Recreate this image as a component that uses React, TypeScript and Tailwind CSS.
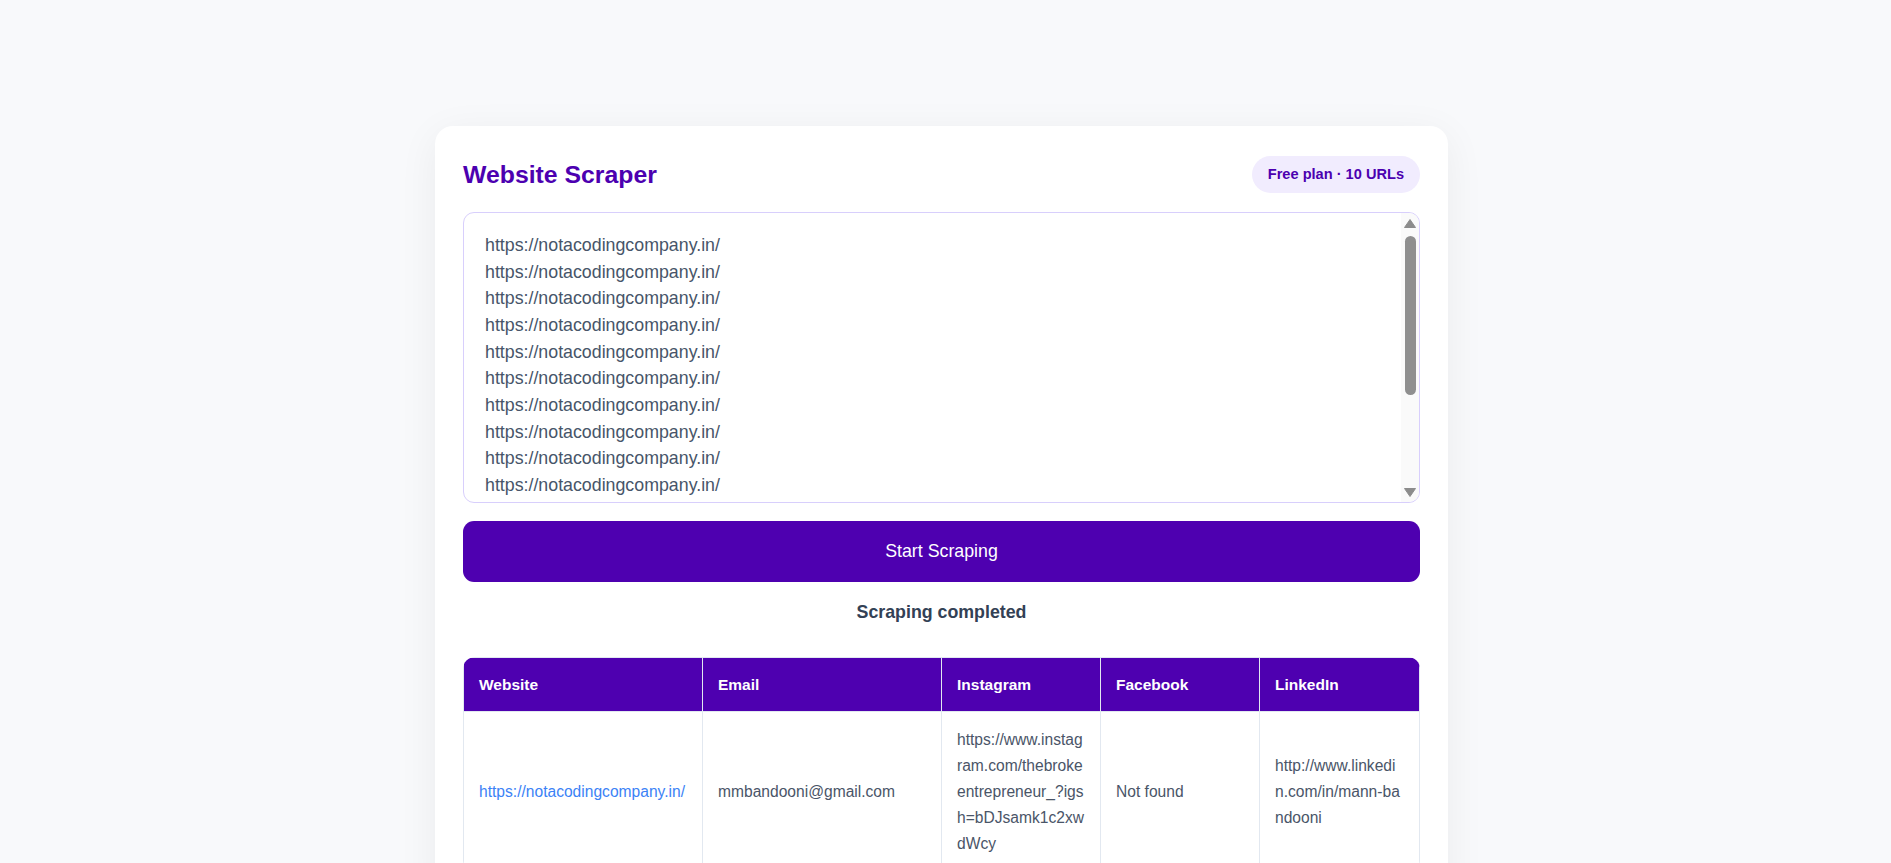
import { useState } from "react";

const URLS = Array.from({ length: 10 }, () => "https://notacodingcompany.in/").join("\n");

function FakeScrollbar() {
  return (
    <div className="pointer-events-none absolute right-[1px] top-[1px] bottom-[1px] flex w-[18px] flex-col items-center rounded-r-[10px] bg-[#fafafa] pt-[6px] pb-[5px]">
      <svg width="12" height="9" viewBox="0 0 12 9">
        <path d="M6 0.5 L11.5 8.5 L0.5 8.5 Z" fill="#8c8c8c" stroke="#8c8c8c" strokeLinejoin="round" />
      </svg>
      <div className="mt-[8px] h-[159px] w-[11px] rounded-full bg-[#8f8f8f]" />
      <div className="flex-1" />
      <svg width="12" height="9" viewBox="0 0 12 9">
        <path d="M0.5 0.5 L11.5 0.5 L6 8.5 Z" fill="#8c8c8c" stroke="#8c8c8c" strokeLinejoin="round" />
      </svg>
    </div>
  );
}

export default function App() {
  const [urls, setUrls] = useState(URLS);

  return (
    <div className="min-h-screen bg-[#f8f9fb] pt-[126px] pr-[8px] font-['Liberation_Sans',Arial,sans-serif]">
      <div className="mx-auto w-[1013px] rounded-[18px] bg-white px-[28px] pt-[30px] pb-[28px] shadow-[0_8px_40px_rgba(15,23,42,0.06)]">
        <div className="flex items-center justify-between">
          <h1 className="text-[24.8px] font-bold leading-[37px] text-[#4c00b0]">Website Scraper</h1>
          <span className="flex h-[37px] items-center rounded-full bg-[#f1ecfe] px-[16px] text-[14.6px] font-bold text-[#4c00b0]">
            Free plan · 10 URLs
          </span>
        </div>

        <div className="relative mt-[19px]">
          <textarea
            value={urls}
            onChange={(e) => setUrls(e.target.value)}
            className="block h-[291px] w-full resize-none overflow-hidden rounded-[11px] border border-[#d8cffc] pt-[19px] pr-[30px] pl-[21px] text-[17.8px] leading-[26.67px] text-[#475569] outline-none"
          />
          <FakeScrollbar />
        </div>

        <button className="mt-[18px] h-[61px] w-full rounded-[11px] bg-[#4e00b0] text-[17.8px] text-white">
          Start Scraping
        </button>

        <p className="mt-[17px] text-center text-[17.8px] font-bold leading-[26.4px] text-[#334155]">
          Scraping completed
        </p>

        <div className="mt-[32px] overflow-hidden rounded-[12px]">
          <table className="w-full table-fixed border-collapse text-left">
            <colgroup>
              <col className="w-[239px]" />
              <col className="w-[239px]" />
              <col className="w-[159px]" />
              <col className="w-[159px]" />
              <col />
            </colgroup>
            <thead>
              <tr className="bg-[#4e00b0]">
                {["Website", "Email", "Instagram", "Facebook", "LinkedIn"].map((h) => (
                  <th
                    key={h}
                    className="border border-[#e2e8f0] px-[15px] py-[15px] text-[15.5px] font-bold leading-[23px] text-white"
                  >
                    {h}
                  </th>
                ))}
              </tr>
            </thead>
            <tbody className="text-[15.6px] leading-[25.8px] text-[#4a5568]">
              <tr>
                <td className="border border-[#e2e8f0] px-[15px] py-[15px] align-middle whitespace-nowrap">
                  <a href="#" className="text-[#3b82f6]">
                    https://notacodingcompany.in/
                  </a>
                </td>
                <td className="border border-[#e2e8f0] px-[15px] py-[15px] align-middle">mmbandooni@gmail.com</td>
                <td className="border border-[#e2e8f0] px-[15px] py-[15px] align-middle break-all">
                  https://www.instagram.com/thebrokeentrepreneur_?igsh=bDJsamk1c2xwdWcy
                </td>
                <td className="border border-[#e2e8f0] px-[15px] py-[15px] align-middle">Not found</td>
                <td className="border border-[#e2e8f0] px-[15px] py-[15px] align-middle break-all">
                  http://www.linkedin.com/in/mann-bandooni
                </td>
              </tr>
            </tbody>
          </table>
        </div>
      </div>
    </div>
  );
}
